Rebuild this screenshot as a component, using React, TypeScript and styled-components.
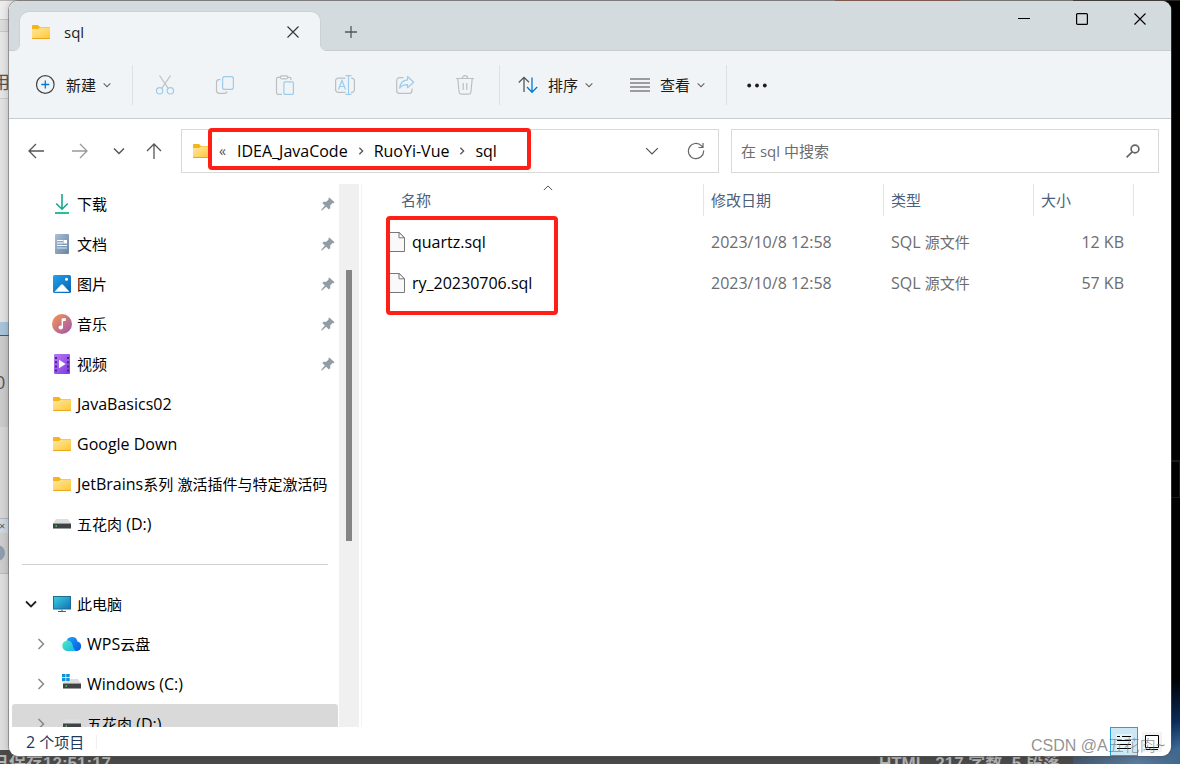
import React from 'react';
import styled, { createGlobalStyle } from 'styled-components';

const GlobalStyle = createGlobalStyle`
  * { box-sizing: border-box; }
  html, body { margin: 0; padding: 0; }
  body {
    font-family: "Open Sans", "Noto Sans CJK SC", sans-serif;
    font-size: 15px;
    line-height: 20px;
    color: #000;
    overflow: hidden;
  }
  button, input { font: inherit; color: inherit; }
  button { background: none; border: 0; padding: 0; }
  a { color: inherit; text-decoration: none; }
  svg { display: block; flex: none; }
`;

/* ---------- text ---------- */

const Latin = styled.span`
  font-size: 16px;
`;

const Label = ({ text }: { text: string }) => (
  <span>
    {text.split(/([\x20-\x7e]+)/).map((part, i) =>
      i % 2 ? <Latin key={i}>{part}</Latin> : part,
    )}
  </span>
);

/* ---------- desktop behind the window ---------- */

const Desktop = styled.div`
  position: relative;
  height: 100vh;
  padding: 1px 9px 8px 9px;
  overflow: hidden;
`;

const Backdrop = styled.div`
  position: absolute;
  inset: 0;
  display: flex;
  flex-direction: column;
`;

const BackTop = styled.div`
  display: flex;
  height: 1px;
  background: #b5b2b2;
`;

const BackTopPart = styled.div<{ $grow: number; $bg: string }>`
  flex: ${(p) => p.$grow};
  background: ${(p) => p.$bg};
`;

const BackMiddle = styled.div`
  flex: 1;
  min-height: 0;
  display: flex;
  justify-content: space-between;
`;

const LeftPage = styled.div`
  width: 40px;
  display: flex;
  flex-direction: column;
  overflow: hidden;
  background: #dedede;
`;

const PageBand = styled.div<{ $h: number; $bg: string; $line?: string }>`
  flex: none;
  display: flex;
  align-items: center;
  height: ${(p) => p.$h}px;
  overflow: hidden;
  background: ${(p) => p.$bg};
  border-bottom: ${(p) => (p.$line ? `1px solid ${p.$line}` : '0')};
`;

const PageText = styled.span<{ $size: number; $shift: number }>`
  margin-left: ${(p) => p.$shift}px;
  font-size: ${(p) => p.$size}px;
  color: #555;
  white-space: nowrap;
`;

const Avatar = styled.span`
  width: 16px;
  height: 16px;
  margin-left: -11px;
  border-radius: 50%;
  background: #8f9eae;
`;

const RightSky = styled.div`
  width: 40px;
  display: flex;
  flex-direction: column;
  justify-content: flex-end;
  background: #000;
`;

const SkyPanel = styled.div`
  height: 38px;
  margin-bottom: 180px;
  border: solid #1c1c1c;
  border-width: 2px 1px 1px;
`;

const Earth = styled.div`
  height: 72px;
  background: linear-gradient(#000, #0c2d5c 60%, #3f6d9c);
`;

const BackBottom = styled.div`
  display: flex;
  height: 14px;
  overflow: hidden;
  background: #4b4b4b;
`;

const EditorStatus = styled.div`
  flex: 1;
  display: flex;
  justify-content: space-between;
  padding: 6px 13px 0 0;
  font-family: "Liberation Sans", "Noto Sans CJK SC", sans-serif;
  font-size: 17px;
  font-weight: 700;
  line-height: 16px;
  color: #b4b4b4;
  white-space: pre;
`;

const SavedText = styled.span`
  margin-left: -8px;
`;

const EarthEdge = styled.div`
  width: 107px;
  background: linear-gradient(90deg, #44596f, #5b7da0 60%, #42688f);
`;

/* ---------- window ---------- */

const Window = styled.main`
  position: relative;
  height: 100%;
  display: flex;
  flex-direction: column;
  overflow: hidden;
  border-radius: 9px;
  background: #fff;
`;

const WindowEdge = styled.div`
  position: relative;
  height: 100%;
  border-radius: 9px;
  box-shadow: 0 0 0 1px rgba(90, 90, 90, 0.5), 0 0 8px rgba(0, 0, 0, 0.25);
`;

const TitleBar = styled.header`
  flex: none;
  display: flex;
  height: 50px;
  padding-left: 11px;
  background: #d4dbde;
  box-shadow: inset 0 -1px #c5cdd0;
`;

const Tab = styled.div`
  position: relative;
  display: flex;
  align-items: center;
  width: 300px;
  height: 39px;
  margin-top: 11px;
  padding: 0 21px 0 12px;
  border-radius: 9px 9px 0 0;
  background: #f0f4f6;
  box-shadow: 0 0 0 1px #cbd2d5;
  clip-path: inset(-2px -10px 0 -10px);

  &::before,
  &::after {
    content: '';
    position: absolute;
    bottom: 0;
    width: 5px;
    height: 5px;
  }
  &::before {
    left: -5px;
    background: radial-gradient(circle at 0 0, transparent 4px, #f0f4f6 5px);
  }
  &::after {
    right: -5px;
    background: radial-gradient(circle at 100% 0, transparent 4px, #f0f4f6 5px);
  }
`;

const TabName = styled.span`
  flex: 1;
  margin-left: 14px;
  font-size: 15px;
  font-weight: 500;
  color: #1b1b1b;
`;

const NewTab = styled.button`
  display: grid;
  place-items: center;
  width: 40px;
  height: 40px;
  margin: 11px 0 0 11px;
`;

const WindowButtons = styled.div`
  display: flex;
  margin-left: auto;
  padding-right: 2px;
`;

const WindowButton = styled.button`
  display: grid;
  place-items: center;
  width: 58px;
  height: 36px;
`;

const Toolbar = styled.div`
  flex: none;
  display: flex;
  align-items: center;
  height: 68px;
  padding-left: 21px;
  background: #f0f4f6;
  border-bottom: 1px solid #c5cdd0;
`;

const Divider = styled.span`
  width: 1px;
  height: 40px;
  margin: 0 12px 0 14px;
  background: #dde1e3;
`;

const ToolGroup = styled.div<{ $gap: number }>`
  display: flex;
  gap: ${(p) => p.$gap}px;
`;

const TextTool = styled.button`
  display: flex;
  align-items: center;
  height: 40px;
  padding: 0 7px 0 6px;
  color: #1b1b1b;
  white-space: nowrap;

  span { margin: 0 7px 0 10px; }
`;

const IconTool = styled.button<{ $w?: number }>`
  display: grid;
  place-items: center;
  width: ${(p) => p.$w ?? 40}px;
  height: 40px;
`;

const AddressRow = styled.div`
  flex: none;
  display: flex;
  align-items: center;
  padding: 10px 12px 11px 8px;
`;

const NavButton = styled.button<{ $w: number }>`
  display: grid;
  place-items: center;
  flex: none;
  width: ${(p) => p.$w}px;
  height: 40px;
`;

const AddressBox = styled.div`
  position: relative;
  flex: 525;
  display: flex;
  align-items: center;
  height: 44px;
  margin-left: 6px;
  padding-left: 11px;
  border: 1px solid #d9d9d9;
`;

const Crumbs = styled.nav`
  flex: 1;
  display: flex;
  align-items: center;
  margin-left: 8px;
  font-size: 16px;
  white-space: nowrap;
`;

const CrumbMore = styled.span`
  width: 18px;
  font-size: 14px;
  color: #555;
`;

const CrumbGap = styled.span`
  display: grid;
  place-items: center;
  width: 26px;
`;

const BoxButton = styled.button`
  display: grid;
  place-items: center;
  width: 44px;
  height: 42px;
`;

const SearchBox = styled.label`
  flex: 399;
  display: flex;
  align-items: center;
  height: 44px;
  margin-left: 12px;
  padding: 0 18px 0 9px;
  border: 1px solid #d9d9d9;
`;

const SearchInput = styled.input`
  flex: 1;
  min-width: 0;
  padding: 0;
  border: 0;
  outline: 0;
  background: none;

  &::placeholder { color: #6d6d6d; opacity: 1; }
`;

const Highlight = styled.div<{ $x: number; $y: number; $w: number; $h: number }>`
  position: absolute;
  left: ${(p) => p.$x}px;
  top: ${(p) => p.$y}px;
  width: ${(p) => p.$w}px;
  height: ${(p) => p.$h}px;
  border: 4px solid #ff1f14;
  border-radius: 4px;
  pointer-events: none;
`;

const Body = styled.div`
  flex: 1;
  min-height: 0;
  display: flex;
`;

const Sidebar = styled.nav`
  flex: none;
  width: 330px;
  padding: 0 1px 0 3px;
  overflow: hidden;
`;

const Tree = styled.ul`
  margin: 0;
  padding: 0;
  list-style: none;
`;

const TreeLink = styled.a<{ $level: number; $selected?: boolean }>`
  display: flex;
  align-items: center;
  height: 40px;
  padding: 0 3px 0 ${(p) => 12 + p.$level * 10}px;
  border-radius: 3px;
  background: ${(p) => (p.$selected ? '#d9d9d9' : 'transparent')};
  white-space: nowrap;
`;

const Expander = styled.span`
  display: grid;
  place-items: center;
  width: 14px;
  margin-right: 14px;
`;

const TreeIcon = styled.span`
  display: grid;
  place-items: center;
  width: 20px;
  height: 20px;
  margin-right: 5px;
`;

const PinSlot = styled.span`
  margin-left: auto;
`;

const TreeRule = styled.hr`
  height: 1px;
  margin: 20px 10px 19px;
  border: 0;
  background: #d0d0d0;
`;

const ScrollTrack = styled.div`
  flex: none;
  width: 20px;
  padding: 86px 7px 0;
  background: #f0f0f0;
`;

const ScrollThumb = styled.div`
  height: 271px;
  background: #858585;
`;

const FilePane = styled.section`
  position: relative;
  flex: 1;
  min-width: 0;
  margin-left: 2px;
  border-left: 1px solid #f2f2f2;
`;

const FileTable = styled.table`
  width: 100%;
  table-layout: fixed;
  border-collapse: collapse;
`;

const HeadCell = styled.th`
  position: relative;
  height: 37px;
  padding: 0;
  font-weight: 400;
  text-align: left;
  vertical-align: top;
  color: #4c607a;
`;

const HeadText = styled.div<{ $indent: number }>`
  height: 32px;
  padding-left: ${(p) => p.$indent}px;
  border-right: 1px solid #e5e5e5;
  line-height: 32px;
`;

const SortMark = styled.span`
  position: absolute;
  top: -1px;
  left: 181px;
`;

const Cell = styled.td<{ $right?: boolean }>`
  height: 41px;
  padding: 0 10px 0 7px;
  text-align: ${(p) => (p.$right ? 'right' : 'left')};
  color: #6d6d6d;
  white-space: nowrap;
`;

const FileName = styled.a`
  display: flex;
  align-items: center;
  gap: 7px;
  padding-left: 19px;
  color: #000;
`;

const StatusBar = styled.footer`
  flex: none;
  display: flex;
  align-items: center;
  height: 29px;
  padding: 0 5px 0 17px;
  color: #1e395b;
`;

const StatusRule = styled.span`
  width: 1px;
  height: 14px;
  margin-left: 12px;
  background: #f0f0f0;
`;

const ViewButtons = styled.div`
  display: flex;
  margin-left: auto;
`;

const ViewButton = styled.button<{ $on?: boolean }>`
  display: grid;
  place-items: center;
  width: 28px;
  height: 29px;
  border: ${(p) => (p.$on ? '1px solid #26a0da' : '0')};
  background: ${(p) => (p.$on ? '#cce8f6' : 'transparent')};
`;

const Watermark = styled.span`
  position: absolute;
  right: 6px;
  bottom: 0;
  font-family: "Liberation Sans", "Noto Sans CJK SC", sans-serif;
  font-size: 16px;
  font-weight: 300;
  color: rgba(110, 110, 110, 0.75);
  white-space: nowrap;
  pointer-events: none;
`;

/* ---------- icons ---------- */

const FolderIcon = () => (
  <svg width="18" height="14" viewBox="0 0 18 14">
    <defs>
      <linearGradient id="folder" x1="0" y1="0" x2="1" y2="1">
        <stop offset="0" stopColor="#ffe7a0" />
        <stop offset="1" stopColor="#ffc83a" />
      </linearGradient>
    </defs>
    <path d="M0 1a1 1 0 0 1 1-1h5l2 2h9a1 1 0 0 1 1 1v3H0z" fill="#f5b31c" />
    <path d="M0 4h6L8 2.600h9.500a.5.5 0 0 1 .5.5V13H0z" fill="url(#folder)" />
    <path d="M0 13h18v.3a.7.7 0 0 1-.7.7H.7a.7.7 0 0 1-.7-.7z" fill="#eaa61a" />
  </svg>
);

const Chevron = ({ dir, size, color, w = 1 }: { dir: 'up' | 'down' | 'right'; size: number; color: string; w?: number }) => {
  const d = {
    up: 'M1 8.500 6 3.500l5 5',
    down: 'M1 3.500l5 5 5-5',
    right: 'M3.500 1l5 5-5 5',
  }[dir];
  return (
    <svg width={size} height={size} viewBox="0 0 12 12" fill="none" stroke={color} strokeWidth={(w * 12) / size}>
      <path d={d} />
    </svg>
  );
};

const CrossIcon = ({ color }: { color: string }) => (
  <svg width="12" height="12" viewBox="0 0 12 12" stroke={color} strokeWidth="1.100">
    <path d="M.5.500l11 11M11.500.500l-11 11" />
  </svg>
);

const PlusIcon = () => (
  <svg width="12" height="12" viewBox="0 0 12 12" stroke="#555" strokeWidth="1.300">
    <path d="M6 0v12M0 6h12" />
  </svg>
);

const MinimizeIcon = () => (
  <svg width="12" height="12" viewBox="0 0 12 12" stroke="#000">
    <path d="M0 5.500h12" />
  </svg>
);

const MaximizeIcon = () => (
  <svg width="12" height="12" viewBox="0 0 12 12" fill="none" stroke="#000" strokeWidth="1.200">
    <rect x=".6" y=".6" width="10.800" height="10.800" rx="1" />
  </svg>
);

const NewIcon = () => (
  <svg width="20" height="20" viewBox="0 0 20 20" fill="none">
    <circle cx="9.300" cy="9.500" r="8.800" stroke="#444" strokeWidth="1.200" />
    <path d="M9.300 5.500v8M5.300 9.500h8" stroke="#0078d4" strokeWidth="1.300" />
  </svg>
);

const GRAY = '#bcbfc1';
const BLUE = '#9ccbee';

const CutIcon = () => (
  <svg width="20" height="20" viewBox="0 0 20 20" fill="none" strokeWidth="1.200">
    <path d="M4.500.500 13 13M15.500.500 7 13" stroke={GRAY} />
    <circle cx="4.600" cy="15.800" r="3.200" stroke={BLUE} />
    <circle cx="15.400" cy="15.800" r="3.200" stroke={BLUE} />
  </svg>
);

const CopyIcon = () => (
  <svg width="20" height="20" viewBox="0 0 20 20" fill="none" strokeWidth="1.200">
    <path d="M5.500 4.600H4A2.500 2.500 0 0 0 1.500 7v8.500A2.800 2.800 0 0 0 4.300 18.300h5A2.600 2.600 0 0 0 12 16.500" stroke={GRAY} />
    <rect x="7.600" y="1.600" width="10.800" height="12.800" rx="2.200" stroke={BLUE} />
  </svg>
);

const PasteIcon = () => (
  <svg width="20" height="20" viewBox="0 0 20 20" fill="none" strokeWidth="1.200">
    <path d="M7 19.300H3.200a1.700 1.700 0 0 1-1.700-1.700V4a1.700 1.700 0 0 1 1.700-1.700H5M12.500 2.300h2A1.500 1.500 0 0 1 16 3.800V5" stroke={GRAY} />
    <rect x="5.300" y=".8" width="7.400" height="3" rx="1.500" stroke={GRAY} />
    <rect x="8.900" y="6.900" width="9.500" height="12.400" rx="1" stroke={BLUE} />
  </svg>
);

const RenameIcon = () => (
  <svg width="22" height="20" viewBox="0 0 22 20" fill="none" strokeWidth="1.200">
    <path d="M11.500 17.400H4.300A2.700 2.700 0 0 1 1.600 14.700V5.800A2.700 2.700 0 0 1 4.300 3.100h7.200M17 3.100A2.900 2.900 0 0 1 20.400 6v8.500a2.900 2.900 0 0 1-3.400 2.900" stroke={GRAY} />
    <path d="M4.500 14.500 8 5.500l3.500 9M5.700 11.500h4.600M11.500.700h6M11.500 19.300h6M14.500.700v18.600" stroke={BLUE} />
  </svg>
);

const ShareIcon = () => (
  <svg width="20" height="20" viewBox="0 0 20 20" fill="none" strokeWidth="1.200" strokeLinejoin="round">
    <path d="M8.500 2.600H4.600A2.900 2.900 0 0 0 1.700 5.500v9.900a2.900 2.900 0 0 0 2.900 2.900h9.500a2.900 2.900 0 0 0 2.900-2.900V13.500" stroke={GRAY} />
    <path d="M12.500 1.500 18.700 7.200l-6.200 5.500V9.600c-3.500 0-6 .8-7.800 3.600.4-4.500 3-8 7.800-8.400z" stroke={BLUE} />
  </svg>
);

const TrashIcon = () => (
  <svg width="20" height="20" viewBox="0 0 20 20" fill="none" stroke={GRAY} strokeWidth="1.200">
    <path d="M1 3.500h18M7.400 3.300a2.600 2.600 0 0 1 5.200 0M2.800 3.700l1.300 13.500a2 2 0 0 0 2 1.900h7.800a2 2 0 0 0 2-1.900L17.200 3.700M8.200 8v7M11.800 8v7" />
  </svg>
);

const SortIcon = () => (
  <svg width="20" height="20" viewBox="0 0 20 20" fill="none" strokeWidth="1.300">
    <path d="M6 17V2.500M.8 7.500 6 2.300l5 5" stroke="#555" />
    <path d="M14 2.500V17M9 12l5 5.200 5.200-5.200" stroke="#0078d4" />
  </svg>
);

const LinesIcon = () => (
  <svg width="20" height="20" viewBox="0 0 20 20" stroke="#444" strokeWidth="1.200">
    <path d="M0 4h20M0 8h20M0 12h20M0 16h20" />
  </svg>
);

const DotsIcon = () => (
  <svg width="20" height="20" viewBox="0 0 20 20" fill="#1b1b1b">
    <circle cx="2.200" cy="10.500" r="1.900" />
    <circle cx="10" cy="10.500" r="1.900" />
    <circle cx="17.800" cy="10.500" r="1.900" />
  </svg>
);

const ArrowIcon = ({ dir, color }: { dir: 'left' | 'right' | 'up'; color: string }) => {
  const d = {
    left: 'M16 8H1M8 1 1 8l7 7',
    right: 'M0 8h15M8 1l7 7-7 7',
    up: 'M8 16V1M1 8l7-7 7 7',
  }[dir];
  return (
    <svg width="16" height="16" viewBox="0 0 16 16" fill="none" stroke={color} strokeWidth="1.300">
      <path d={d} />
    </svg>
  );
};

const RefreshIcon = () => (
  <svg width="18" height="18" viewBox="0 0 18 18" fill="none" stroke="#666" strokeWidth="1.200">
    <path d="M16.600 8.500A7.600 7.600 0 1 1 14.500 3.800l1.500 1.500M16 1v4.500h-4.500" />
  </svg>
);

const SearchIcon = () => (
  <svg width="14" height="14" viewBox="0 0 14 14" fill="none" stroke="#666" strokeWidth="1.700">
    <circle cx="9" cy="5" r="3.900" />
    <path d="M6.200 7.800.6 13.400" />
  </svg>
);

const PinIcon = () => (
  <svg width="14" height="14" viewBox="0 0 14 14" fill="#929ca4">
    <path d="M8.300.500 13.500 5.300l-.7.900-1.300-.1-2.300 2.400.1 2.600-1.300 1.400-2.900-2.700L1 13.500l-.8-.2.1-.6 3.600-4.200L1.300 6l1.200-1.300 2.800.100L7.600 2.500 7.500 1.200z" />
  </svg>
);

const DownloadIcon = () => (
  <svg width="14" height="20" viewBox="0 0 14 20" fill="none" strokeWidth="1.600">
    <path d="M7 0v15M1.200 9.500 7 15.200l5.800-5.700" stroke="#17a890" />
    <path d="M0 19h14" stroke="#2cc090" strokeWidth="2" />
  </svg>
);

const DocumentIcon = () => (
  <svg width="14" height="20" viewBox="0 0 14 20">
    <defs>
      <linearGradient id="doc" x1="0" y1="0" x2="1" y2="1">
        <stop offset="0" stopColor="#a9bfd6" />
        <stop offset="1" stopColor="#6883a5" />
      </linearGradient>
    </defs>
    <rect width="14" height="20" rx="1" fill="url(#doc)" />
    <path d="M2 6.500h6M2 9h6M2 11.500h10" stroke="#fff" strokeWidth="1.100" />
    <path d="M2 14h10" stroke="#dbe5ef" />
    <rect x="8.500" y="6" width="3.500" height="3.500" fill="#fff" />
  </svg>
);

const PictureIcon = () => (
  <svg width="18" height="18" viewBox="0 0 18 18">
    <defs>
      <linearGradient id="pic" x1="0" y1="0" x2="1" y2="1">
        <stop offset="0" stopColor="#22a2e8" />
        <stop offset="1" stopColor="#0861b4" />
      </linearGradient>
    </defs>
    <rect width="18" height="18" rx="1.500" fill="url(#pic)" />
    <path d="M1.500 16.800 8 9.700q1-.9 2 0l6.500 7.100z" fill="#fff" />
    <circle cx="13.500" cy="4.300" r="1.500" fill="#fff" />
  </svg>
);

const MusicIcon = () => (
  <svg width="20" height="20" viewBox="0 0 20 20">
    <defs>
      <linearGradient id="music" x1="0" y1="0" x2="1" y2="1">
        <stop offset="0.100" stopColor="#f0905a" />
        <stop offset="0.900" stopColor="#a45aa8" />
      </linearGradient>
    </defs>
    <circle cx="10" cy="10" r="10" fill="url(#music)" />
    <ellipse cx="8.800" cy="13.500" rx="2.200" ry="2" fill="#fff" />
    <path d="M9.600 4.500 13.800 4v2.800l-2.800.500v6.200H9.600z" fill="#fff" />
  </svg>
);

const VideoIcon = () => (
  <svg width="16" height="20" viewBox="0 0 16 20">
    <defs>
      <linearGradient id="video" x1="0" y1="0" x2="1" y2="1">
        <stop offset="0" stopColor="#b57cf4" />
        <stop offset="1" stopColor="#8038e0" />
      </linearGradient>
    </defs>
    <rect width="16" height="20" rx="1" fill="url(#video)" />
    <path d="M2 3v15M14 3v15" stroke="#4c1f8c" strokeWidth="2" strokeDasharray="2 2.200" />
    <path d="M5 5.700v8.600l6.600-4.300z" fill="#fff" />
  </svg>
);

const DriveIcon = ({ windows }: { windows?: boolean }) => (
  <svg width="20" height="20" viewBox="0 0 20 20">
    <path d="M4 5h12l3 4.500H1z" fill="#dcdee0" />
    <path d="M1 9.500h18V14H1z" fill="#3f4346" />
    <path d="M1 14h18v1H1z" fill="#9a9c9e" />
    <rect x="3.500" y="11.200" width="1.500" height="1.500" fill="#3ddc4a" />
    {windows && (
      <>
        <path d="M0 0h8v8H0z" fill="#fff" />
        <path d="M0 0h3.500v3.200H0zM4.200 0h3.500v3.200H4.200zM0 4h3.500v3.200H0zM4.200 4h3.500v3.200H4.200z" fill="#1090d8" />
      </>
    )}
  </svg>
);

const ComputerIcon = () => (
  <svg width="18" height="16" viewBox="0 0 18 16">
    <defs>
      <linearGradient id="pc" x1="0" y1="0" x2="1" y2="1">
        <stop offset="0" stopColor="#3bd0dc" />
        <stop offset="1" stopColor="#1171b8" />
      </linearGradient>
    </defs>
    <rect x=".5" y=".5" width="17" height="12.500" fill="url(#pc)" stroke="#1d6d92" />
    <path d="M8 13h2v2H8z" fill="#9aa0a4" />
    <path d="M5 15h8v1H5z" fill="#555b60" />
  </svg>
);

const CloudIcon = () => (
  <svg width="20" height="16" viewBox="0 0 20 16">
    <defs>
      <linearGradient id="cloudA" x1="0" y1="0" x2="1" y2="1">
        <stop offset="0" stopColor="#52ecb8" />
        <stop offset="1" stopColor="#12b4f0" />
      </linearGradient>
      <linearGradient id="cloudB" x1="0" y1="0" x2="1" y2="1">
        <stop offset="0" stopColor="#18a4ff" />
        <stop offset="1" stopColor="#0a55dc" />
      </linearGradient>
    </defs>
    <path d="M4.500 6a5.600 5.600 0 0 1 11-.6A4.900 4.900 0 0 1 14.800 15H6z" fill="url(#cloudB)" />
    <path d="M5.500 4.500a5.400 5.400 0 0 1 5 4.200c.7 3 2 5 3.500 6.300H5.500a5.250 5.250 0 0 1 0-10.500z" fill="url(#cloudA)" />
  </svg>
);

const FileIcon = () => (
  <svg width="17" height="20" viewBox="0 0 17 20" fill="#f9f9f9" stroke="#777">
    <path d="M.5.500h10.800l5.200 5.200v13.800H.5z" />
    <path d="M11 .500v5.300h5.500z" fill="#fff" />
  </svg>
);

const DetailsIcon = () => (
  <svg width="16" height="16" viewBox="0 0 16 16" stroke="#000">
    <rect width="16" height="16" fill="#fff" fillOpacity=".5" stroke="none" />
    <path d="M1 2.500h3M6 2.500h9M1 6.500h14M1 10.500h14M1 14.500h14" />
  </svg>
);

const TilesIcon = () => (
  <svg width="20" height="20" viewBox="0 0 20 20">
    <rect width="20" height="20" fill="#f3f3f3" />
    <path d="M3.500 3.500h13v12h-13zM4 17.500h12" fill="#fff" stroke="#000" />
  </svg>
);

/* ---------- data ---------- */

type Place = {
  name: string;
  icon: React.ReactNode;
  pinned?: boolean;
  level?: number;
  expander?: 'down' | 'right';
  selected?: boolean;
};

const quickAccess: Place[] = [
  { name: '下载', icon: <DownloadIcon />, pinned: true },
  { name: '文档', icon: <DocumentIcon />, pinned: true },
  { name: '图片', icon: <PictureIcon />, pinned: true },
  { name: '音乐', icon: <MusicIcon />, pinned: true },
  { name: '视频', icon: <VideoIcon />, pinned: true },
  { name: 'JavaBasics02', icon: <FolderIcon /> },
  { name: 'Google Down', icon: <FolderIcon /> },
  { name: 'JetBrains系列 激活插件与特定激活码', icon: <FolderIcon /> },
  { name: '五花肉 (D:)', icon: <DriveIcon /> },
];

const computer: Place[] = [
  { name: '此电脑', icon: <ComputerIcon />, expander: 'down' },
  { name: 'WPS云盘', icon: <CloudIcon />, level: 1, expander: 'right' },
  { name: 'Windows (C:)', icon: <DriveIcon windows />, level: 1, expander: 'right' },
  { name: '五花肉 (D:)', icon: <DriveIcon />, level: 1, expander: 'right', selected: true },
];

const files = [
  { name: 'quartz.sql', date: '2023/10/8 12:58', type: 'SQL 源文件', size: '12 KB' },
  { name: 'ry_20230706.sql', date: '2023/10/8 12:58', type: 'SQL 源文件', size: '57 KB' },
];

const editTools = [
  { name: '剪切', icon: <CutIcon /> },
  { name: '复制', icon: <CopyIcon /> },
  { name: '粘贴', icon: <PasteIcon /> },
  { name: '重命名', icon: <RenameIcon /> },
  { name: '共享', icon: <ShareIcon /> },
  { name: '删除', icon: <TrashIcon /> },
];

const PlaceList = ({ places }: { places: Place[] }) => (
  <Tree>
    {places.map((p) => (
      <li key={p.name}>
        <TreeLink href="#" $level={p.level ?? 0} $selected={p.selected}>
          <Expander>
            {p.expander && (
              <Chevron
                dir={p.expander}
                size={12}
                color={p.expander === 'down' ? '#222' : '#888'}
                w={p.expander === 'down' ? 1.8 : 1.5}
              />
            )}
          </Expander>
          <TreeIcon>{p.icon}</TreeIcon>
          <Label text={p.name} />
          {p.pinned && (
            <PinSlot>
              <PinIcon />
            </PinSlot>
          )}
        </TreeLink>
      </li>
    ))}
  </Tree>
);

const ToolButton = ({ icon, text }: { icon: React.ReactNode; text: string }) => (
  <TextTool>
    {icon}
    <span>{text}</span>
    <Chevron dir="down" size={8} color="#666" w={1.1} />
  </TextTool>
);

const DesktopBackdrop = () => (
  <Backdrop aria-hidden="true">
    <BackTop>
      <BackTopPart $grow={835} $bg="#b5b2b2" />
      <BackTopPart $grow={125} $bg="#b8604c" />
      <BackTopPart $grow={113} $bg="#a8a2a2" />
      <BackTopPart $grow={107} $bg="#2b2626" />
    </BackTop>
    <BackMiddle>
      <LeftPage>
        <PageBand $h={19} $bg="#ededed" $line="#c4c4c4" />
        <PageBand $h={12} $bg="#dcdcdc" $line="#c8c8c8" />
        <PageBand $h={34} $bg="#e6e6e6" />
        <PageBand $h={33} $bg="#e6e6e6" $line="#cccccc">
          <PageText $size={18} $shift={-8}>用</PageText>
        </PageBand>
        <PageBand $h={223} $bg="#e2e2e2" />
        <PageBand $h={14} $bg="#a9c4da" $line="#555" />
        <PageBand $h={91} $bg="#cbcbcb">
          <PageText $size={18} $shift={-5}>0</PageText>
        </PageBand>
        <PageBand $h={92} $bg="#d6d6d6" $line="#aeb6bb" />
        <PageBand $h={14} $bg="#cfd8de">
          <PageText $size={11} $shift={-1}>×</PageText>
        </PageBand>
        <PageBand $h={41} $bg="#cdcdcd" $line="#bbbbbb">
          <Avatar />
        </PageBand>
      </LeftPage>
      <RightSky>
        <SkyPanel />
        <Earth />
      </RightSky>
    </BackMiddle>
    <BackBottom>
      <EditorStatus>
        <SavedText>已保存12:51:17</SavedText>
        <span>HTML  217 字数  5 段落</span>
      </EditorStatus>
      <EarthEdge />
    </BackBottom>
  </Backdrop>
);

export default function App() {
  return (
    <Desktop>
      <GlobalStyle />
      <DesktopBackdrop />
      <WindowEdge>
        <Window>
          <TitleBar>
            <Tab>
              <FolderIcon />
              <TabName>sql</TabName>
              <button aria-label="关闭标签页">
                <CrossIcon color="#333" />
              </button>
            </Tab>
            <NewTab aria-label="新标签页">
              <PlusIcon />
            </NewTab>
            <WindowButtons>
              <WindowButton aria-label="最小化"><MinimizeIcon /></WindowButton>
              <WindowButton aria-label="最大化"><MaximizeIcon /></WindowButton>
              <WindowButton aria-label="关闭"><CrossIcon color="#000" /></WindowButton>
            </WindowButtons>
          </TitleBar>

          <Toolbar>
            <ToolGroup $gap={24}>
              <ToolButton icon={<NewIcon />} text="新建" />
            </ToolGroup>
            <Divider />
            <ToolGroup $gap={20}>
              {editTools.map((t) => (
                <IconTool key={t.name} aria-label={t.name}>{t.icon}</IconTool>
              ))}
            </ToolGroup>
            <Divider />
            <ToolGroup $gap={24}>
              <ToolButton icon={<SortIcon />} text="排序" />
              <ToolButton icon={<LinesIcon />} text="查看" />
            </ToolGroup>
            <Divider />
            <IconTool $w={36} aria-label="更多"><DotsIcon /></IconTool>
          </Toolbar>

          <AddressRow>
            <NavButton $w={38} aria-label="后退"><ArrowIcon dir="left" color="#555" /></NavButton>
            <NavButton $w={50} aria-label="前进"><ArrowIcon dir="right" color="#999" /></NavButton>
            <NavButton $w={28} aria-label="最近"><Chevron dir="down" size={12} color="#555" w={1.5} /></NavButton>
            <NavButton $w={42} aria-label="向上"><ArrowIcon dir="up" color="#555" /></NavButton>
            <AddressBox>
              <FolderIcon />
              <Crumbs aria-label="路径">
                <CrumbMore>«</CrumbMore>
                <a href="#">IDEA_JavaCode</a>
                <CrumbGap><Chevron dir="right" size={8} color="#555" w={1.3} /></CrumbGap>
                <a href="#">RuoYi-Vue</a>
                <CrumbGap><Chevron dir="right" size={8} color="#555" w={1.3} /></CrumbGap>
                <a href="#">sql</a>
              </Crumbs>
              <BoxButton aria-label="历史"><Chevron dir="down" size={14} color="#555" w={1.2} /></BoxButton>
              <BoxButton aria-label="刷新"><RefreshIcon /></BoxButton>
              <Highlight $x={26} $y={-2} $w={323} $h={42} />
            </AddressBox>
            <SearchBox>
              <SearchInput type="text" aria-label="搜索" placeholder="在 sql 中搜索" />
              <SearchIcon />
            </SearchBox>
          </AddressRow>

          <Body>
            <Sidebar aria-label="导航窗格">
              <PlaceList places={quickAccess} />
              <TreeRule />
              <PlaceList places={computer} />
            </Sidebar>
            <ScrollTrack>
              <ScrollThumb />
            </ScrollTrack>
            <FilePane>
              <FileTable>
                <colgroup>
                  <col style={{ width: 342 }} />
                  <col style={{ width: 180 }} />
                  <col style={{ width: 150 }} />
                  <col style={{ width: 100 }} />
                  <col />
                </colgroup>
                <thead>
                  <tr>
                    <HeadCell>
                      <SortMark><Chevron dir="up" size={10} color="#555" /></SortMark>
                      <HeadText $indent={39}>名称</HeadText>
                    </HeadCell>
                    <HeadCell><HeadText $indent={7}>修改日期</HeadText></HeadCell>
                    <HeadCell><HeadText $indent={7}>类型</HeadText></HeadCell>
                    <HeadCell><HeadText $indent={7}>大小</HeadText></HeadCell>
                    <HeadCell />
                  </tr>
                </thead>
                <tbody>
                  {files.map((f) => (
                    <tr key={f.name}>
                      <Cell>
                        <FileName href="#">
                          <FileIcon />
                          <Label text={f.name} />
                        </FileName>
                      </Cell>
                      <Cell><Label text={f.date} /></Cell>
                      <Cell><Label text={f.type} /></Cell>
                      <Cell $right><Label text={f.size} /></Cell>
                      <Cell />
                    </tr>
                  ))}
                </tbody>
              </FileTable>
              <Highlight $x={24} $y={32} $w={172} $h={99} />
            </FilePane>
          </Body>

          <StatusBar>
            <Label text="2 个项目" />
            <StatusRule />
            <ViewButtons>
              <ViewButton $on aria-label="详细信息"><DetailsIcon /></ViewButton>
              <ViewButton aria-label="大图标"><TilesIcon /></ViewButton>
            </ViewButtons>
          </StatusBar>
          <Watermark>CSDN @A五花肉~</Watermark>
        </Window>
      </WindowEdge>
    </Desktop>
  );
}
